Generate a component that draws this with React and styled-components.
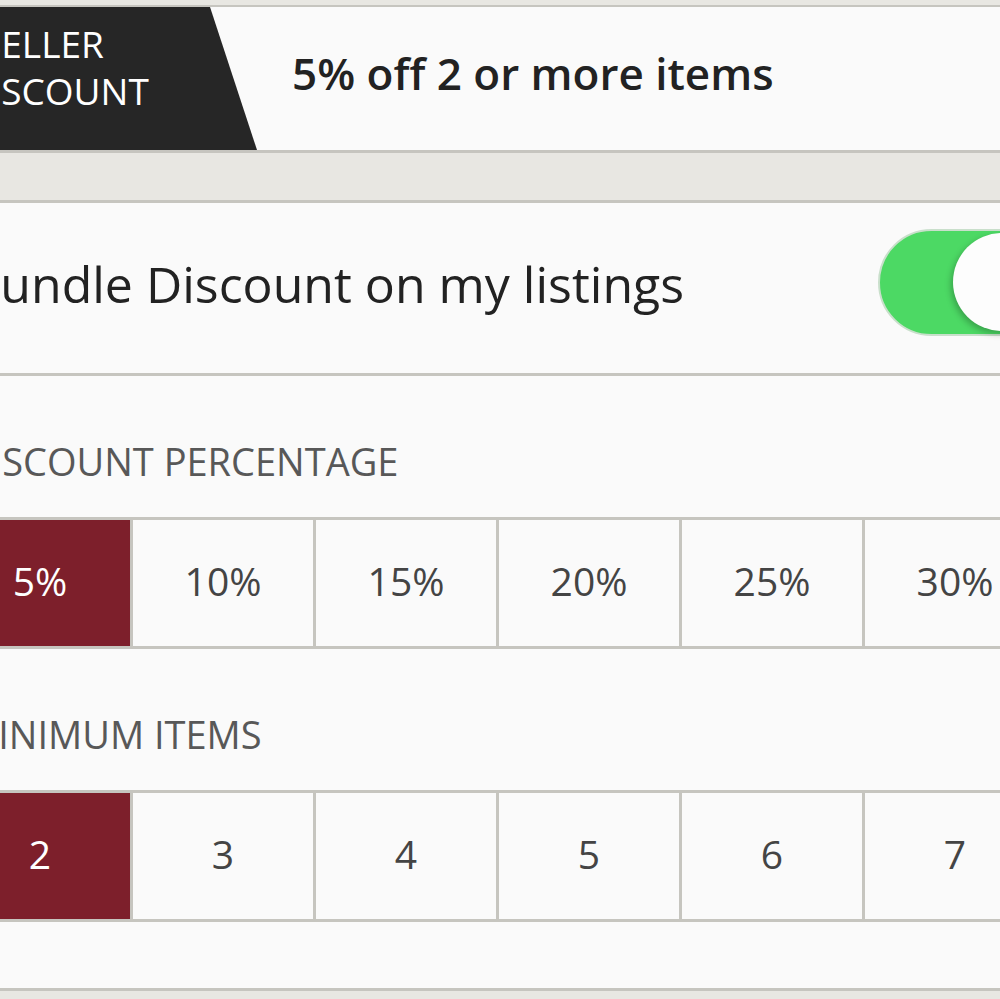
import React from "react";
import styled, { createGlobalStyle } from "styled-components";

const LINE = "#c6c5bf";
const PAPER = "#fafafa";
const BAND = "#e8e7e2";
const WINE = "#7d1f2b";

const GlobalStyle = createGlobalStyle`
  html, body {
    margin: 0;
    padding: 0;
    background: ${BAND};
    overflow: hidden;
  }
  body {
    font-family: "Open Sans", Lato, "Liberation Sans", sans-serif;
    -webkit-font-smoothing: antialiased;
  }
`;

const Page = styled.div`
  width: 1100px;
  margin-left: -50px;
  height: 999px;
  background: ${BAND};
`;

const TopStrip = styled.div`
  height: 5px;
  background: ${BAND};
  border-bottom: 2px solid ${LINE};
`;

const SummaryCard = styled.div`
  display: flex;
  align-items: stretch;
  height: 143px;
  background: ${PAPER};
  border-bottom: 3px solid ${LINE};
`;

const Tab = styled.div`
  width: 307px;
  flex: none;
  box-sizing: border-box;
  padding: 13px 0 0 14px;
  background: #262626;
  clip-path: polygon(0 0, 260px 0, 307px 100%, 0 100%);
  color: #fff;
  font-size: 37px;
  line-height: 47px;
  text-transform: uppercase;
  text-indent: 17px;
`;

const Summary = styled.div`
  display: flex;
  align-items: center;
  padding-left: 35px;
  padding-bottom: 12px;
  font-size: 44px;
  font-weight: 600;
  color: #222;
`;

const Band = styled.div`
  height: 47px;
  background: ${BAND};
  border-bottom: 3px solid ${LINE};
`;

const Settings = styled.div`
  background: ${PAPER};
  border-bottom: 3px solid ${LINE};
  padding-bottom: 66px;
`;

const ToggleRow = styled.div`
  display: flex;
  align-items: center;
  justify-content: space-between;
  height: 170px;
  padding-left: 18px;
  border-bottom: 3px solid ${LINE};
  overflow: hidden;
`;

const ToggleLabel = styled.div`
  font-size: 50px;
  color: #222;
  padding-bottom: 8px;
`;

const Switch = styled.div`
  position: relative;
  width: 180px;
  height: 107px;
  margin-right: -8px;
  margin-top: -12px;
  flex: none;
  box-sizing: border-box;
  border-radius: 54px;
  background: #4cd964;
  border: 2px solid #c9dfcb;
`;

const Knob = styled.div`
  position: absolute;
  top: 2px;
  left: 73px;
  width: 98px;
  height: 98px;
  border-radius: 50%;
  background: #fdfdfd;
  box-shadow: -2px 3px 6px rgba(0, 0, 0, 0.25);
`;

const Section = styled.div`
  padding-top: 65px;
`;

const SectionLabel = styled.div`
  padding-left: 14px;
  margin-bottom: 36px;
  font-size: 38px;
  line-height: 40px;
  color: #585858;
  text-transform: uppercase;
`;

const OptionGrid = styled.div`
  display: grid;
  grid-template-columns: repeat(6, 183px);
  border-top: 3px solid ${LINE};
  border-bottom: 3px solid ${LINE};
`;

const Option = styled.div`
  display: flex;
  align-items: center;
  justify-content: center;
  height: 126px;
  box-sizing: border-box;
  border-right: 3px solid ${LINE};
  background: ${(p) => (p.active ? WINE : PAPER)};
  color: ${(p) => (p.active ? "#fff" : "#444")};
  font-size: 39px;
  padding-bottom: 6px;
`;

const percentages = ["5%", "10%", "15%", "20%", "25%", "30%"];
const minItems = ["2", "3", "4", "5", "6", "7"];

const OptionPicker = ({ label, options, value }) => (
  <Section>
    <SectionLabel>{label}</SectionLabel>
    <OptionGrid>
      {options.map((o) => (
        <Option key={o} active={o === value}>
          {o}
        </Option>
      ))}
    </OptionGrid>
  </Section>
);

export default function App() {
  return (
    <Page>
      <GlobalStyle />
      <TopStrip />
      <SummaryCard>
        <Tab>
          Seller
          <br />
          Discount
        </Tab>
        <Summary>5% off 2 or more items</Summary>
      </SummaryCard>
      <Band />
      <Settings>
        <ToggleRow>
          <ToggleLabel>Bundle Discount on my listings</ToggleLabel>
          <Switch>
            <Knob />
          </Switch>
        </ToggleRow>
        <OptionPicker label="Discount percentage" options={percentages} value="5%" />
        <OptionPicker label="Minimum items" options={minItems} value="2" />
      </Settings>
    </Page>
  );
}
